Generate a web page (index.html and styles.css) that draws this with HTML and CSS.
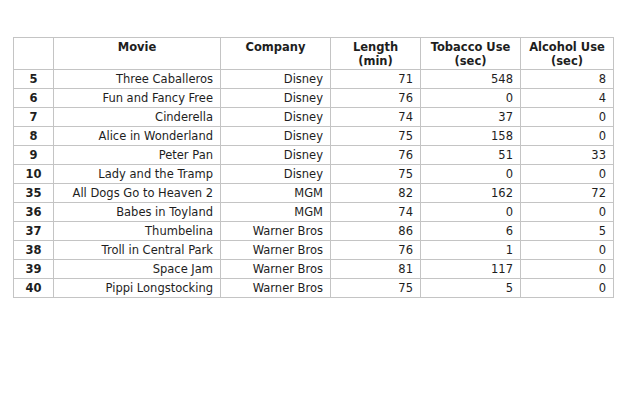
FILE: index.html
```html
<!DOCTYPE html>
<html>
<head>
<meta charset="utf-8">
<link rel="stylesheet" href="styles.css">
</head>
<body>
<table class="data">
  <colgroup>
    <col class="c-id"><col class="c-movie"><col class="c-company"><col class="c-len"><col class="c-tob"><col class="c-alc">
  </colgroup>
  <thead>
    <tr><th></th><th>Movie</th><th>Company</th><th>Length<br>(min)</th><th>Tobacco Use<br>(sec)</th><th>Alcohol Use<br>(sec)</th></tr>
  </thead>
  <tbody>
    <tr><th>5</th><td>Three Caballeros</td><td>Disney</td><td>71</td><td>548</td><td>8</td></tr>
    <tr><th>6</th><td>Fun and Fancy Free</td><td>Disney</td><td>76</td><td>0</td><td>4</td></tr>
    <tr><th>7</th><td>Cinderella</td><td>Disney</td><td>74</td><td>37</td><td>0</td></tr>
    <tr><th>8</th><td>Alice in Wonderland</td><td>Disney</td><td>75</td><td>158</td><td>0</td></tr>
    <tr><th>9</th><td>Peter Pan</td><td>Disney</td><td>76</td><td>51</td><td>33</td></tr>
    <tr><th>10</th><td>Lady and the Tramp</td><td>Disney</td><td>75</td><td>0</td><td>0</td></tr>
    <tr><th>35</th><td>All Dogs Go to Heaven 2</td><td>MGM</td><td>82</td><td>162</td><td>72</td></tr>
    <tr><th>36</th><td>Babes in Toyland</td><td>MGM</td><td>74</td><td>0</td><td>0</td></tr>
    <tr><th>37</th><td>Thumbelina</td><td>Warner Bros</td><td>86</td><td>6</td><td>5</td></tr>
    <tr><th>38</th><td>Troll in Central Park</td><td>Warner Bros</td><td>76</td><td>1</td><td>0</td></tr>
    <tr><th>39</th><td>Space Jam</td><td>Warner Bros</td><td>81</td><td>117</td><td>0</td></tr>
    <tr><th>40</th><td>Pippi Longstocking</td><td>Warner Bros</td><td>75</td><td>5</td><td>0</td></tr>
  </tbody>
</table>
</body>
</html>
```
FILE: styles.css
```css
html, body {
  margin: 0;
  background: #ffffff;
}
body {
  padding: 37px 0 0 13px;
  font-family: "DejaVu Sans", Verdana, sans-serif;
  font-size: 11.5px;
  color: #1e1e1e;
}
.data {
  border-collapse: collapse;
  table-layout: fixed;
  width: 601px;
}
.c-id { width: 40px; }
.c-movie { width: 167px; }
.c-company { width: 110px; }
.c-len { width: 90px; }
.c-tob { width: 100px; }
.c-alc { width: 93px; }
.data th, .data td {
  border: 1px solid #c4c4c4;
  padding: 2px 7px 2px 4px;
  line-height: 14px;
  height: 14px;
  white-space: nowrap;
}
.data td {
  text-align: right;
}
.data tbody th {
  text-align: center;
  padding-right: 4px;
  font-weight: bold;
}
.data thead th {
  vertical-align: top;
  text-align: center;
  padding: 2px 4px 1px;
  line-height: 14px;
  height: 28px;
}
```
